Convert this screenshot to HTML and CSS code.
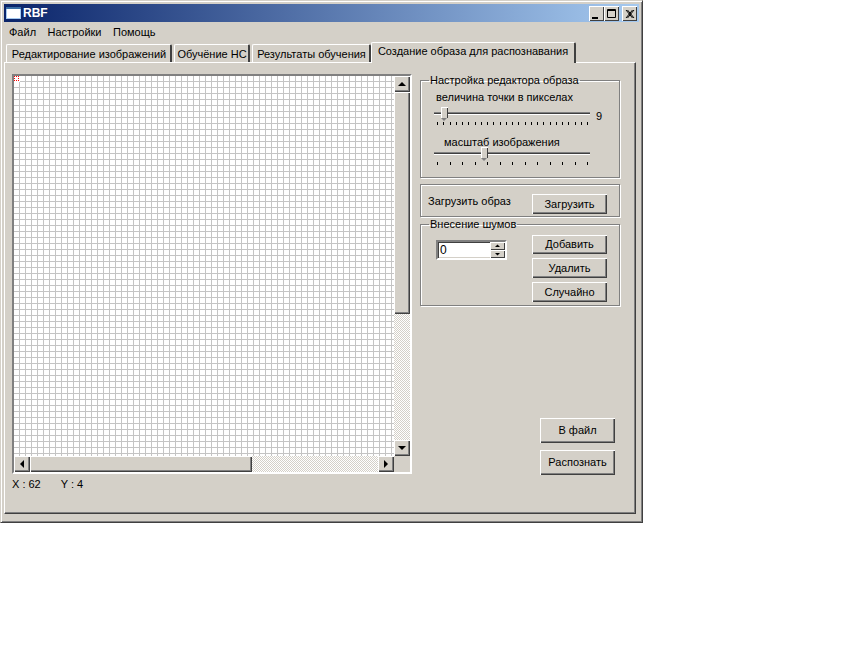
FILE: index.html
```html
<!DOCTYPE html>
<html lang="ru">
<head>
<meta charset="utf-8">
<title>RBF</title>
<link rel="stylesheet" href="styles.css">
</head>
<body>
<div class="window">
  <div class="titlebar">
    <svg class="app-icon" width="15" height="12" viewBox="0 0 15 12"><rect width="15" height="12" fill="#a6caf0"/><rect x="0" y="0" width="15" height="2" fill="#3a6ea5"/><rect x="1" y="2" width="13" height="9" fill="#fff"/></svg>
    <span class="title-text">RBF</span>
    <div class="caption-btns">
      <div class="cap"><svg width="15" height="15" viewBox="0 0 15 15"><rect x="3" y="11" width="6" height="2" fill="#000"/></svg></div>
      <div class="cap"><svg width="15" height="15" viewBox="0 0 15 15"><path d="M3.500 3.500h8v8h-8zM3 4.500h9" fill="none" stroke="#000"/></svg></div>
      <div class="cap cap-close"><svg width="15" height="15" viewBox="0 0 15 15"><path d="M4 4l6.500 8M5.500 4l6.500 8M10.500 4l-6.500 8M12 4l-6.500 8" stroke="#000" fill="none"/></svg></div>
    </div>
  </div>
  <div class="menubar"><span>Файл</span><span>Настройки</span><span>Помощь</span></div>
  <div class="tabs">
    <div class="tab t1">Редактирование изображений</div>
    <div class="tab t2">Обучёние НС</div>
    <div class="tab t3">Результаты обучения</div>
    <div class="tab active t4">Создание образа для распознавания</div>
  </div>
  <div class="panel">
    <div class="left">
      <div class="canvas-frame">
        <div class="canvas-row">
          <div class="grid"><svg class="marker" width="6" height="6" viewBox="0 0 6 6" shape-rendering="crispEdges"><rect width="6" height="6" fill="#fff"/><path d="M0 0h1v1H0zM2 0h1v1H2zM4 0h1v1H4zM0 2h1v1H0zM4 2h1v1H4zM0 4h1v1H0zM2 4h1v1H2zM4 4h1v1H4z" fill="#f00"/></svg></div>
          <div class="vscroll">
            <div class="sbtn"><svg width="16" height="16" viewBox="0 0 16 16"><path d="M4 10h8L8 6z" fill="#000"/></svg></div>
            <div class="vthumb"></div>
            <div class="vtrack"></div>
            <div class="sbtn"><svg width="16" height="16" viewBox="0 0 16 16"><path d="M4 6h8L8 10z" fill="#000"/></svg></div>
          </div>
        </div>
        <div class="hscroll">
          <div class="sbtn"><svg width="16" height="16" viewBox="0 0 16 16"><path d="M10 4v8L6 8z" fill="#000"/></svg></div>
          <div class="hthumb"></div>
          <div class="htrack"></div>
          <div class="sbtn"><svg width="16" height="16" viewBox="0 0 16 16"><path d="M6 4v8l4-4z" fill="#000"/></svg></div>
          <div class="corner"></div>
        </div>
      </div>
      <div class="status"><span>X : 62</span><span>Y : 4</span></div>
    </div>
    <div class="right">
      <fieldset class="group g1">
        <legend>Настройка редактора образа</legend>
        <div class="lbl l1">величина точки в пикселах</div>
        <div class="slider-row">
          <div class="slider s1"><div class="track"></div><div class="thumb th1"></div></div>
          <span class="val">9</span>
        </div>
        <div class="ticks tk1"><i></i><i></i><i></i><i></i><i></i><i></i><i></i><i></i><i></i><i></i><i></i><i></i><i></i><i></i><i></i><i></i><i></i><i></i><i></i><i></i><i></i><i></i><i></i><i></i><i></i></div>
        <div class="lbl l2">масштаб изображения</div>
        <div class="slider s2"><div class="track"></div><div class="thumb th2"></div></div>
        <div class="ticks tk2"><i></i><i></i><i></i><i></i><i></i><i></i><i></i><i></i><i></i><i></i><i></i><i></i><i></i></div>
      </fieldset>
      <div class="group g2">
        <span class="g2-text">Загрузить образ</span>
        <div class="btn b-load">Загрузить</div>
      </div>
      <fieldset class="group g3">
        <legend>Внесение шумов</legend>
        <div class="g3-row">
          <div class="spin">
            <span class="spin-val">0</span>
            <div class="spin-btns">
              <div class="sb"><svg width="15" height="8" viewBox="0 0 15 8"><path d="M5 5h5L7.500 2.500z" fill="#000"/></svg></div>
              <div class="sb"><svg width="15" height="8" viewBox="0 0 15 8"><path d="M5 3h5L7.500 5.500z" fill="#000"/></svg></div>
            </div>
          </div>
          <div class="g3-btns">
            <div class="btn b-add">Добавить</div>
            <div class="btn b-del">Удалить</div>
            <div class="btn b-rnd">Случайно</div>
          </div>
        </div>
      </fieldset>
      <div class="actions">
        <div class="btn big">В файл</div>
        <div class="btn big">Распознать</div>
      </div>
    </div>
  </div>
</div>
</body>
</html>
```
FILE: styles.css
```css
* { box-sizing: border-box; }
html, body { margin: 0; padding: 0; background: #fff; }
body { font: 11px/13px "Liberation Sans", Arial, sans-serif; color: #000; width: 868px; height: 646px; overflow: hidden; }
.window { width: 643px; height: 523px; background: #d4d0c8; border: 1px solid; border-color: #d4d0c8 #404040 #404040 #d4d0c8; box-shadow: inset 1px 1px 0 #fff, inset -1px -1px 0 #808080; padding: 3px; display: flex; flex-direction: column; }
.titlebar { height: 18px; background: linear-gradient(90deg, #0a246a, #a6caf0); display: flex; align-items: center; color: #fff; font-weight: 700; padding: 0 2px; flex: none; }
.app-icon { margin-right: 2px; }
.title-text { font-size: 12px; }
.caption-btns { margin-left: auto; display: flex; }
.cap { width: 15px; height: 15px; background: #d4d0c8; box-shadow: inset 1px 1px 0 #fff, inset -1px -1px 0 #404040; }
.cap svg { display: block; }
.cap-close { margin-left: 3px; }
.menubar { height: 20px; display: flex; align-items: center; padding-left: 5px; gap: 11.500px; flex: none; }
.tabs { height: 20px; display: flex; padding-left: 2px; flex: none; align-items: flex-end; position: relative; z-index: 1; }
.tab { height: 18px; padding: 3px 0 0; text-align: center; border-top: 1px solid #fff; border-left: 1px solid #fff; border-right: 2px solid #404040; border-radius: 2px 2px 0 0; white-space: nowrap; }
.t1 { width: 166px; padding-left: 1px; }
.t2 { width: 76px; margin-left: 2px; padding-left: 1px; }
.t3 { width: 119px; margin-left: 2px; padding-left: 1px; }
.t4 { width: 205px; height: 21px; background: #d4d0c8; padding-top: 2px; }
.tab.active { margin-bottom: -1px; }
.panel { width: 632px; height: 452px; border: 1px solid; border-color: #fff #404040 #404040 #fff; box-shadow: inset -1px -1px 0 #808080; display: flex; padding: 11px 0 0 7px; flex: none; }
.left { width: 408px; flex: none; }
.canvas-frame { width: 400px; height: 400px; border: 2px solid; border-color: #808080 #fff #fff #808080; box-shadow: inset 1px 1px 0 #404040; background: #d4d0c8; }
.canvas-row { display: flex; height: 380px; }
.grid { width: 380px; height: 380px; background-color: #fff; background-image: linear-gradient(90deg, transparent 5px, #c4c4c4 5px), linear-gradient(transparent 5px, #c4c4c4 5px); background-size: 6px 6px; }
.marker { display: block; }
.vscroll { width: 16px; display: flex; flex-direction: column; }
.hscroll { display: flex; height: 16px; }
.sbtn { width: 16px; height: 16px; flex: none; background: #d4d0c8; box-shadow: inset 1px 1px 0 #fff, inset -1px -1px 0 #404040, inset -2px -2px 0 #808080; }
.sbtn svg { display: block; }
.vthumb { height: 222px; flex: none; background: #d4d0c8; box-shadow: inset 1px 1px 0 #fff, inset -1px -1px 0 #404040, inset -2px -2px 0 #808080; }
.hthumb { width: 222px; flex: none; background: #d4d0c8; box-shadow: inset 1px 1px 0 #fff, inset -1px -1px 0 #404040, inset -2px -2px 0 #808080; }
.vtrack, .htrack { flex: 1; background: repeating-conic-gradient(#fff 0 25%, #d4d0c8 0 50%) 0 0 / 2px 2px; }
.corner { width: 16px; flex: none; }
.status { display: flex; gap: 20px; padding: 4px 0 0 0; }
.right { width: 200px; flex: none; display: flex; flex-direction: column; }
.group { margin: 0; padding: 0; border: 1px solid #808080; box-shadow: 1px 1px 0 #fff, inset 1px 1px 0 #fff; width: 200px; min-width: 0; }
legend { padding: 0 1px; margin-left: 8px; line-height: 13px; }
.g1 { height: 104px; padding: 0 0 0 13px; }
.g1 legend { margin-left: -5px; }
.lbl { line-height: 13px; }
.l1 { margin: 4px 0 0 2px; }
.l2 { margin: 11px 0 0 10px; }
.slider-row { display: flex; align-items: flex-start; margin-top: 5px; height: 12px; }
.slider { width: 156px; height: 12px; position: relative; flex: none; }
.track { position: absolute; left: 0; right: 0; top: 3px; height: 3px; background: #404040; border-top: 1px solid #808080; border-bottom: 1px solid #fff; }
.thumb { position: absolute; top: -2px; width: 7px; height: 11px; background: #d4d0c8; box-shadow: inset 1px 1px 0 #fff, inset -1px 0 0 #404040; }
.thumb::after { content: ""; position: absolute; left: 0; top: 11px; border: solid transparent; border-width: 3px 3.500px 0; border-top-color: #808080; }
.th1 { left: 7px; }
.th2 { left: 47px; }
.val { margin: 1px 0 0 6px; }
.s2 { margin-top: 0; }
.ticks { display: flex; justify-content: space-between; height: 3px; width: 151px; margin: 1px 0 0 3px; }
.ticks i { width: 1px; height: 3px; background: #000; }
.g2 { height: 33px; margin-top: 6px; display: flex; align-items: flex-start; padding: 0 12px 0 7px; justify-content: space-between; }
.g2-text { margin-top: 10px; }
.btn { width: 75px; text-align: center; background: #d4d0c8; box-shadow: inset 1px 1px 0 #fff, inset -1px -1px 0 #404040, inset -2px -2px 0 #808080; display: flex; align-items: center; justify-content: center; }
.b-load { height: 20px; margin-top: 9px; }
.g3 { height: 88px; margin-top: 1px; }
.g3-row { display: flex; padding: 0 12px 0 15px; justify-content: space-between; margin-top: 4px; }
.spin { width: 71px; height: 20px; margin-top: 5px; background: #fff; border: 2px solid; border-color: #808080 #fff #fff #808080; box-shadow: inset 1px 1px 0 #404040, inset -1px -1px 0 #d4d0c8; display: flex; justify-content: space-between; font-size: 12px; }
.spin-val { padding: 2px 0 0 2px; }
.spin-btns { width: 15px; flex: none; display: flex; flex-direction: column; }
.sb { height: 8px; background: #d4d0c8; box-shadow: inset 1px 1px 0 #fff, inset -1px -1px 0 #404040; }
.sb svg { display: block; }
.g3-btns { display: flex; flex-direction: column; gap: 4px; }
.b-add { height: 19px; }
.b-del { height: 20px; }
.b-rnd { height: 20px; }
.actions { margin: 112px 0 0 120px; display: flex; flex-direction: column; gap: 7px; }
.big { height: 25px; }
```
